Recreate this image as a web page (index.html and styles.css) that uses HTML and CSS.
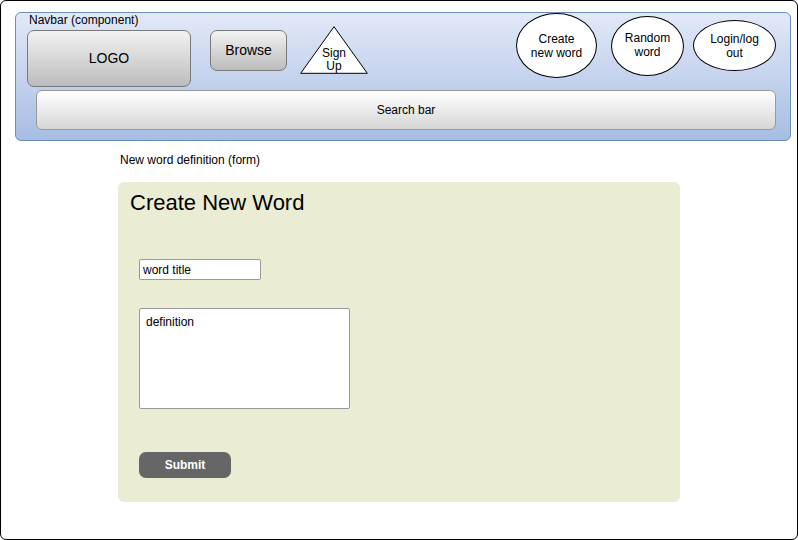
FILE: index.html
```html
<!DOCTYPE html>
<html>
<head>
<meta charset="utf-8">
<link rel="stylesheet" href="styles.css">
</head>
<body>
<div class="frame">
  <div class="navbar">
    <div class="top-row">
      <div class="left-col">
        <div class="nav-label">Navbar (component)</div>
        <div class="left-items">
          <div class="logo">LOGO</div>
          <div class="browse">Browse</div>
          <div class="signup">
            <svg class="tri" width="68" height="48" viewBox="0 0 68 48"><polygon points="34,0.7 67.3,47.3 0.7,47.3" fill="#fff" stroke="#000" stroke-width="1"/></svg>
            <span class="signup-text">Sign<br>Up</span>
          </div>
        </div>
      </div>
      <div class="right-items">
        <div class="ellipse e-create">Create<br>new word</div>
        <div class="ellipse e-random">Random<br>word</div>
        <div class="ellipse e-login">Login/log<br>out</div>
      </div>
    </div>
    <div class="search">Search bar</div>
  </div>
  <div class="form-label">New word definition (form)</div>
  <div class="panel">
    <h1 class="panel-title">Create New Word</h1>
    <div class="input-title">word title</div>
    <div class="textarea">definition</div>
    <div class="submit">Submit</div>
  </div>
</div>
</body>
</html>
```

FILE: styles.css
```css
* { box-sizing: border-box; }
html, body { margin: 0; padding: 0; background: #fff; }
body { font-family: "Liberation Sans", Arial, sans-serif; color: #000; }

.frame {
  width: 798px;
  height: 540px;
  border: 1px solid #000;
  border-radius: 6px;
  padding: 11px 0 0 14px;
}

.navbar {
  width: 776px;
  height: 129px;
  border: 1px solid #6c8ebf;
  border-radius: 6px;
  background: linear-gradient(to bottom, #e2e9f8 0%, #a7bde3 100%);
  display: flex;
  flex-direction: column;
}

.top-row {
  display: flex;
  align-items: flex-start;
  padding-right: 14px;
}

.left-col {
  padding-left: 11px;
  display: flex;
  flex-direction: column;
}

.nav-label {
  font-size: 12px;
  line-height: 14px;
  padding-left: 2px;
}

.left-items {
  display: flex;
  align-items: flex-start;
  margin-top: 3px;
}

.logo {
  width: 164px;
  height: 57px;
  border: 1px solid #7a7a7a;
  border-radius: 7px;
  background: linear-gradient(to bottom, #f2f2f2 0%, #bcbcbc 100%);
  display: flex;
  align-items: center;
  justify-content: center;
  font-size: 14px;
  padding-bottom: 2px;
}

.browse {
  width: 77px;
  height: 41px;
  margin-left: 19px;
  border: 1px solid #7a7a7a;
  border-radius: 7px;
  background: linear-gradient(to bottom, #f2f2f2 0%, #bcbcbc 100%);
  display: flex;
  align-items: center;
  justify-content: center;
  font-size: 14px;
  padding-bottom: 2px;
}

.signup {
  position: relative;
  width: 68px;
  height: 48px;
  margin-left: 13px;
  margin-top: -4px;
  display: flex;
  justify-content: center;
  align-items: flex-end;
}

.tri { position: absolute; left: 0; top: 0; }

.signup-text {
  position: relative;
  font-size: 12px;
  line-height: 13px;
  text-align: center;
  padding-bottom: 1px;
}

.right-items {
  margin-left: auto;
  display: flex;
  align-items: flex-start;
}

.ellipse {
  border: 1px solid #000;
  border-radius: 50%;
  background: #fff;
  display: flex;
  align-items: center;
  justify-content: center;
  text-align: center;
  font-size: 12px;
  line-height: 14px;
}

.e-create { width: 81px; height: 65px; margin-top: 0; }
.e-random { width: 73px; height: 60px; margin-top: 3px; margin-left: 14px; padding-bottom: 2px; }
.e-login { width: 83px; height: 51px; margin-top: 7px; margin-left: 9px; }

.search {
  margin: 3px 0 0 20px;
  width: 740px;
  height: 40px;
  border: 1px solid #9a9a9a;
  border-radius: 6px;
  background: linear-gradient(to bottom, #ffffff 0%, #d6d6d6 100%);
  display: flex;
  align-items: center;
  justify-content: center;
  font-size: 12px;
}

.form-label {
  margin: 12px 0 0 105px;
  font-size: 12px;
  line-height: 14px;
}

.panel {
  margin: 15px 0 0 103px;
  width: 562px;
  height: 320px;
  border-radius: 6px;
  background: #eaedd3;
  padding: 8px 0 0 21px;
}

.panel-title {
  margin: 0 0 0 -9px;
  font-weight: normal;
  font-size: 22px;
  line-height: 26px;
}

.input-title {
  margin-top: 43px;
  width: 122px;
  height: 21px;
  border: 1px solid #999;
  border-radius: 2px;
  background: #fff;
  font-size: 12px;
  line-height: 19px;
  padding: 1px 0 0 3px;
}

.textarea {
  margin-top: 28px;
  width: 211px;
  height: 101px;
  border: 1px solid #999;
  border-radius: 2px;
  background: #fff;
  font-size: 12px;
  line-height: 14px;
  padding: 6px 0 0 6px;
}

.submit {
  margin-top: 43px;
  width: 92px;
  height: 26px;
  border-radius: 7px;
  background: #666;
  color: #fff;
  font-weight: bold;
  font-size: 12px;
  display: flex;
  align-items: center;
  justify-content: center;
}
```
